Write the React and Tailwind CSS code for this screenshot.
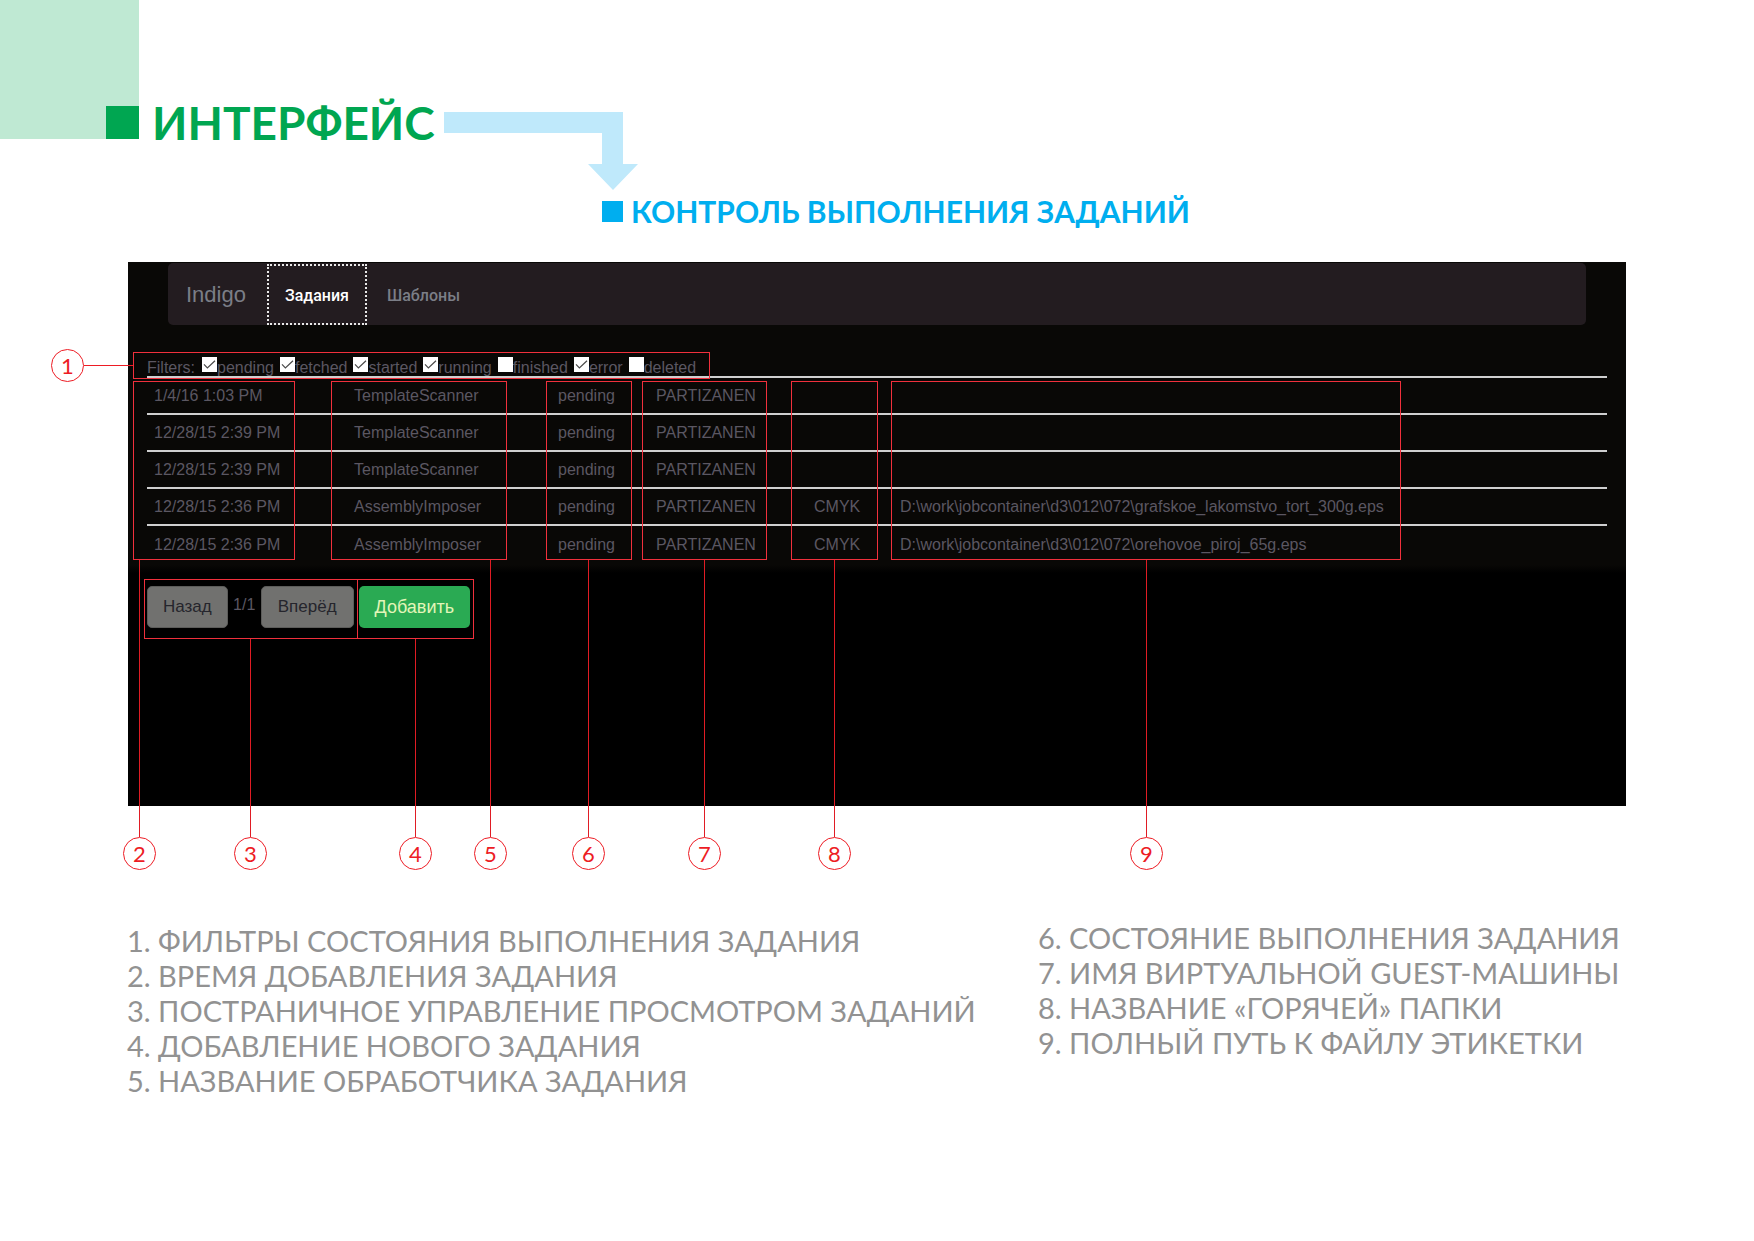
const filters = [
  { name: "pending", on: true },
  { name: "fetched", on: true },
  { name: "started", on: true },
  { name: "running", on: true },
  { name: "finished", on: false },
  { name: "error", on: true },
  { name: "deleted", on: false },
];

const jobs = [
  ["1/4/16 1:03 PM", "TemplateScanner", "pending", "PARTIZANEN", "", ""],
  ["12/28/15 2:39 PM", "TemplateScanner", "pending", "PARTIZANEN", "", ""],
  ["12/28/15 2:39 PM", "TemplateScanner", "pending", "PARTIZANEN", "", ""],
  ["12/28/15 2:36 PM", "AssemblyImposer", "pending", "PARTIZANEN", "CMYK", "D:\\work\\jobcontainer\\d3\\012\\072\\grafskoe_lakomstvo_tort_300g.eps"],
  ["12/28/15 2:36 PM", "AssemblyImposer", "pending", "PARTIZANEN", "CMYK", "D:\\work\\jobcontainer\\d3\\012\\072\\orehovoe_piroj_65g.eps"],
];

const leftLegend = [
  "1. ФИЛЬТРЫ СОСТОЯНИЯ ВЫПОЛНЕНИЯ ЗАДАНИЯ",
  "2. ВРЕМЯ ДОБАВЛЕНИЯ ЗАДАНИЯ",
  "3. ПОСТРАНИЧНОЕ УПРАВЛЕНИЕ ПРОСМОТРОМ ЗАДАНИЙ",
  "4. ДОБАВЛЕНИЕ НОВОГО ЗАДАНИЯ",
  "5. НАЗВАНИЕ ОБРАБОТЧИКА ЗАДАНИЯ",
];

const rightLegend = [
  "6. СОСТОЯНИЕ ВЫПОЛНЕНИЯ ЗАДАНИЯ",
  "7. ИМЯ ВИРТУАЛЬНОЙ GUEST-МАШИНЫ",
  "8. НАЗВАНИЕ «ГОРЯЧЕЙ» ПАПКИ",
  "9. ПОЛНЫЙ ПУТЬ К ФАЙЛУ ЭТИКЕТКИ",
];

// Frame: the outlined area. Stem: the leader and numbered badge below it.
const callouts = [
  { n: 2, frame: "left-[5px] w-[162px] top-[119px] h-[179px]", stem: "left-[-5px] top-[298px] h-[310px]" },
  { n: 5, frame: "left-[203px] w-[176px] top-[119px] h-[179px]", stem: "left-[346px] top-[298px] h-[310px]" },
  { n: 6, frame: "left-[418px] w-[86px] top-[119px] h-[179px]", stem: "left-[444px] top-[298px] h-[310px]" },
  { n: 7, frame: "left-[514px] w-[125px] top-[119px] h-[179px]", stem: "left-[560px] top-[298px] h-[310px]" },
  { n: 8, frame: "left-[663px] w-[87px] top-[119px] h-[179px]", stem: "left-[690px] top-[298px] h-[310px]" },
  { n: 9, frame: "left-[763px] w-[510px] top-[119px] h-[179px]", stem: "left-[1002px] top-[298px] h-[310px]" },
  { n: 3, frame: "left-[16px] w-[214px] top-[317px] h-[60px]", stem: "left-[106px] top-[377px] h-[231px]" },
  { n: 4, frame: "left-[229px] w-[117px] top-[317px] h-[60px]", stem: "left-[271px] top-[377px] h-[231px]" },
];

function Badge({ n }) {
  return (
    <span className="flex size-[33px] shrink-0 items-center justify-center rounded-full border border-[#ed1c24] bg-white font-['Lato',sans-serif] text-[22px] leading-none text-[#ed1c24]">
      {n}
    </span>
  );
}

function Callouts() {
  return (
    <div className="pointer-events-none absolute inset-0">
      <div className="absolute left-[5px] top-[90px] h-[27px] w-[577px] border border-[#f0303c]" />
      <div className="absolute left-[-77px] top-[87px] flex w-[82px] items-center">
        <Badge n={1} />
        <span className="h-px grow bg-[#ed1c24]" />
      </div>
      {callouts.map((c) => (
        <div key={c.n}>
          <div className={"absolute border border-[#f0303c] " + c.frame} />
          <div className={"absolute flex w-[33px] flex-col items-center " + c.stem}>
            <span className="w-px grow bg-[#e01c24]" />
            <Badge n={c.n} />
          </div>
        </div>
      ))}
    </div>
  );
}

function Filter({ name, on }) {
  return (
    <label className="flex items-start">
      <span className="relative -mt-px size-[15px]">
        <input type="checkbox" defaultChecked={on} className="peer block size-[15px] appearance-none bg-white" />
        <svg viewBox="0 0 15 15" className="pointer-events-none absolute inset-0 hidden size-[15px] peer-checked:block" fill="none" stroke="#4a4a4a" strokeWidth="1.2">
          <path d="M2 7.4 5.4 11 13 3.8" />
        </svg>
      </span>
      <span>{name}</span>
    </label>
  );
}

export default function App() {
  return (
    <main className="relative w-full bg-white pb-32 font-['Lato',sans-serif]">
      <div className="absolute left-0 top-0 size-[139px] bg-[#bfe9d3]" />

      <header className="relative flex items-start pl-[106px] pt-[106px]">
        <span className="size-[33px] bg-[#00a651]" />
        <h1 className="ml-[13px] -mt-2 text-[46px] font-bold leading-[50px] text-[#00a651]">ИНТЕРФЕЙС</h1>
        <svg className="ml-[9px] mt-[6px] h-[78px] w-[194px]" viewBox="0 0 194 78" aria-hidden="true">
          <path d="M0 0H179V52H194L169 78L144 52H158V21H0Z" fill="#bfe9fb" />
        </svg>
      </header>

      <div className="flex items-center pl-[602px] pt-[3px]">
        <span className="size-[21px] bg-[#00aeef]" />
        <h2 className="ml-2 text-[30px] font-bold leading-[36px] text-[#00aeef]">КОНТРОЛЬ ВЫПОЛНЕНИЯ ЗАДАНИЙ</h2>
      </div>

      <section className="relative mx-[128px] mt-[33px] bg-[linear-gradient(#090806_0px,#090806_303px,#000_311px)] pb-[178px] pt-px font-['Liberation_Sans',sans-serif] text-base text-[#5b5762]">
        <nav className="mx-10 flex h-[62px] items-center rounded-[5px] bg-[#231c20]">
          <a href="#home" className="ml-[18px] text-[22px] text-[#7b7e87]">Indigo</a>
          <a href="#jobs" className="ml-[21px] flex h-[61px] items-center border-2 border-dotted border-[#e8e8e8] px-4 pt-[3px] font-['Roboto',sans-serif] font-medium text-white">Задания</a>
          <a href="#templates" className="ml-5 pt-[3px] font-['Roboto',sans-serif] font-medium text-[#7b7e87]">Шаблоны</a>
        </nav>

        <div className="mx-[19px] mt-[33px]">
          <div className="flex h-[18px] gap-[6px] leading-5">
            <span className="mr-px">Filters:</span>
            {filters.map((f) => (
              <Filter key={f.name} name={f.name} on={f.on} />
            ))}
          </div>

          <table className="w-full table-fixed border-collapse text-left leading-6">
            <colgroup>
              <col className="w-[200px]" />
              <col className="w-[204px]" />
              <col className="w-[98px]" />
              <col className="w-[158px]" />
              <col className="w-[86px]" />
              <col />
            </colgroup>
            <tbody>
              {jobs.map((job, i) => (
                <tr key={i} className="h-[37px] border-t-2 border-[#cfcfcf]">
                  {job.map((cell, j) => (
                    <td key={j} className="whitespace-nowrap pb-0 pl-[7px] pt-px">{cell}</td>
                  ))}
                </tr>
              ))}
            </tbody>
          </table>

          <div className="mt-6 flex items-center text-[17px]">
            <button type="button" className="h-[42px] rounded-[5px] border border-[#5c5c5a] bg-[#71716f] px-[15px] text-[#25252c]">Назад</button>
            <span className="w-[33px] pb-1 text-center text-base">1/1</span>
            <button type="button" className="h-[42px] rounded-[5px] border border-[#5c5c5a] bg-[#71716f] px-4 text-[#25252c]">Вперёд</button>
            <button type="button" className="ml-[5px] h-[42px] rounded-[5px] bg-[#2aaa53] px-4 text-[18px] text-[#e3f5b8]">Добавить</button>
          </div>
        </div>

        <Callouts />
      </section>

      <div className="mx-[127px] mt-[114px] flex items-start justify-between text-[29px] leading-[35px] text-[#929292]">
        <ul className="mt-[3px]">
          {leftLegend.map((t) => (
            <li key={t}>{t}</li>
          ))}
        </ul>
        <ul className="w-[589px]">
          {rightLegend.map((t) => (
            <li key={t}>{t}</li>
          ))}
        </ul>
      </div>
    </main>
  );
}
